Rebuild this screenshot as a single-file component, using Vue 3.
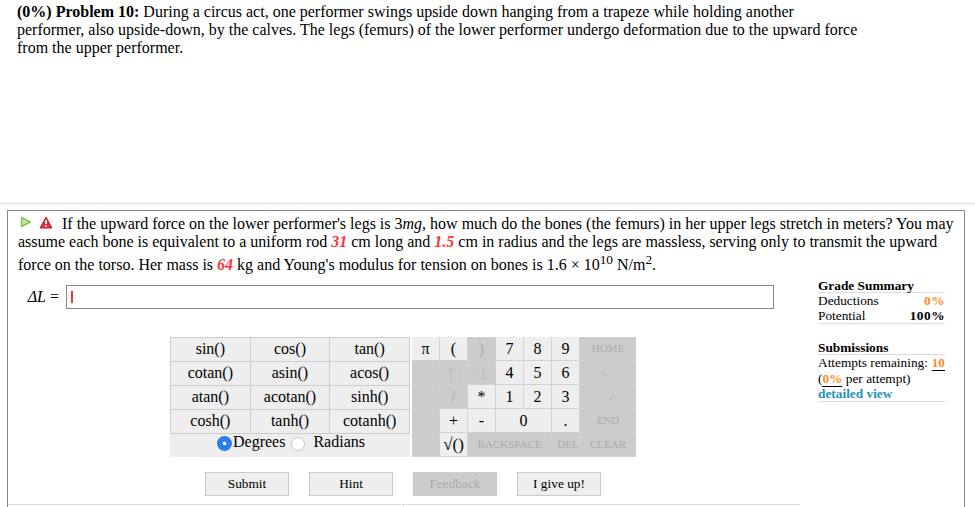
<script setup>
const fns = ['sin()','cos()','tan()','cotan()','asin()','acos()','atan()','acotan()','sinh()','cosh()','tanh()','cotanh()']
const btns = [{t:'Submit'},{t:'Hint'},{t:'Feedback',off:1},{t:'I give up!'}]
</script>

<template>
  <div class="page">
    <header class="problem">
      <p><b>(0%) Problem 10:</b> During a circus act, one performer swings upside down hanging from a trapeze while holding another<br>performer, also upside-down, by the calves. The legs (femurs) of the lower performer undergo deformation due to the upward force<br>from the upper performer.</p>
    </header>
    <section class="box">
      <p class="question">
        <span class="icons">
          <svg width="12" height="12" viewBox="0 0 12 12"><path d="M1.5 1.5 L10.5 6 L1.5 10.5 Z" fill="#c4e59a" stroke="#8fbf5e" stroke-width="1.4" stroke-linejoin="round"/></svg>
          <svg width="14" height="13" viewBox="0 0 14 13"><path d="M7 1 L13 12 H1 Z" fill="#d8303f" stroke="#c02535" stroke-width="1" stroke-linejoin="round"/><path d="M7 4 V8 M7 9.2 V10.8" stroke="#fff" stroke-width="1.7"/></svg>
        </span>If the upward force on the lower performer's legs is 3<i>mg</i>, how much do the bones (the femurs) in her upper legs stretch in meters? You may<br>assume each bone is equivalent to a uniform rod <b class="var">31</b> cm long and <b class="var">1.5</b> cm in radius and the legs are massless, serving only to transmit the upward<br>force on the torso. Her mass is <b class="var">64</b> kg and Young's modulus for tension on bones is 1.6 × 10<sup>10</sup> N/m<sup>2</sup>.
      </p>
      <div class="work">
        <div class="main">
          <div class="answer">
            <label><i>ΔL</i> =</label>
            <div class="input"><span class="caret"></span></div>
          </div>
          <div class="calc">
            <div class="fn-panel">
              <div class="fns">
                <div v-for="f in fns" :key="f" class="fn">{{ f }}</div>
              </div>
              <div class="modes">
                <span class="radio on"></span><span>Degrees</span>
                <span class="radio"></span><span class="rad">Radians</span>
              </div>
            </div>
            <div class="keys">
              <div class="k">π</div><div class="k">(</div><div class="k off">)</div><div class="k">7</div><div class="k">8</div><div class="k">9</div><div class="k off sm">HOME</div>
              <div class="k off"></div><div class="k off arrow">↑<small>/</small></div><div class="k off arrow"><small>^</small>↓</div><div class="k">4</div><div class="k">5</div><div class="k">6</div><div class="k off sm wide">←</div>
              <div class="k off"></div><div class="k off">/</div><div class="k">*</div><div class="k">1</div><div class="k">2</div><div class="k">3</div><div class="k off sm wide">→</div>
              <div class="k off"></div><div class="k">+</div><div class="k">-</div><div class="k two">0</div><div class="k">.</div><div class="k off sm">END</div>
              <div class="k off"></div><div class="k sq">√()</div><div class="k off sm three">BACKSPACE</div><div class="k off sm del">DEL</div><div class="k off sm">CLEAR</div>
            </div>
          </div>
          <div class="actions">
            <button v-for="b in btns" :key="b.t" :class="{ off: b.off }">{{ b.t }}</button>
          </div>
        </div>
        <aside class="side">
          <h4>Grade Summary</h4>
          <div class="row"><span>Deductions</span><b class="or pct">0%</b></div>
          <div class="row last"><span>Potential</span><b class="pct">100%</b></div>
          <h4 class="sub">Submissions</h4>
          <div class="row"><span>Attempts remaining:</span><b class="or ul">10</b></div>
          <div class="plain">(<b class="or ul">0%</b> per attempt)</div>
          <div class="detail">detailed view</div>
        </aside>
      </div>
      <div class="foot"><div></div><div></div></div>
    </section>
  </div>
</template>

<style>
html, body { margin: 0; background: #fff; overflow: hidden; }
</style>

<style scoped>
.page { width: 975px; height: 507px; overflow: hidden; font-family: "Liberation Serif", serif; font-size: 16px; color: #000; position: relative; }
p { margin: 0; }
.problem { height: 200px; padding: 3px 17px 0; border-bottom: 1px solid #ddd; line-height: 18px; }
.box { margin: 6px 10px 0 7px; border: 1px solid #888; border-bottom: 0; padding: 4px 10px 0; height: 300px; box-sizing: border-box; }
.question { line-height: 18px; }
.question sup { font-size: 13.33px; }
.icons { display: inline-flex; gap: 7px; width: 44px; vertical-align: 1px; padding-left: 2px; box-sizing: border-box; align-items: flex-start; }
.var { color: #f33; font-style: italic; }
.work { display: flex; margin-top: 11px; position: relative; }
.main { width: 790px; }
.answer { display: flex; align-items: center; }
.answer label { width: 41px; text-align: right; white-space: nowrap; }
.input { width: 702px; height: 22px; margin-left: 7px; border: 1px solid #888; background: #fff; display: flex; align-items: center; padding-left: 4px; }
.caret { flex: none; width: 2px; height: 12px; background: #ff3030; }
.calc { display: flex; gap: 2px; margin: 28px 0 0 152px; }
.fn-panel { width: 240px; background: #eee; }
.fns { display: grid; grid-template-columns: repeat(3, 1fr); gap: 1px; background: #ccc; border: 1px solid #ccc; border-bottom: 0; box-sizing: border-box; }
.fn { background: #eee; height: 23px; line-height: 22px; text-align: center; }
.modes { height: 24px; border-top: 1px solid #ccc; display: flex; align-items: flex-start; justify-content: center; line-height: 16px; box-sizing: border-box; padding-left: 2px; }
.radio { width: 14px; height: 14px; border-radius: 50%; background: #fff; border: 1px solid #c4c4c4; box-sizing: border-box; margin: 3px 2px 0 0; }
.radio.on { background: radial-gradient(circle, #fff 0 1.5px, #2b7fe8 2.2px); border: 0; width: 15px; height: 15px; margin: 2px 1px 0 0; }
.rad { margin-left: 6px; }
.modes span:nth-child(3) { margin-left: 6px; }
.keys { width: 224px; height: 120px; display: grid; grid-template-columns: repeat(6, 27px) 56px; grid-auto-rows: 23px; gap: 1px; background: #d2d2d2; }
.k { background: #eee; text-align: center; line-height: 23px; font-size: 16px; overflow: hidden; white-space: nowrap; }
.k.off { background: #ccc; color: #aaa; }
.sm { font-size: 11px; }
.wide { font-size: 14px; color: #bbb !important; }
.arrow { font-size: 22px; color: #bbb !important; letter-spacing: 2px; }
.arrow small { font-size: 12px; letter-spacing: 0; }
.two { grid-column: span 2; }
.three { grid-column: span 3; }
.del { padding-left: 5px; }
.sq { font-size: 17px; }
.actions { display: flex; gap: 20px; margin: 15px 0 0 187px; }
button { width: 84px; height: 24px; border: 1px solid #ccc; background: #eee; font: 13.33px "Liberation Serif", serif; color: #000; padding: 0; }
button.off { background: #ccc; color: #aaa; }
.side { position: absolute; left: 800px; top: -6px; width: 127px; font-size: 13.33px; line-height: 15px; white-space: nowrap; }
h4 { margin: 0; font-size: 13.33px; line-height: 13px; border-bottom: 1px solid #ddd; }
.row { display: flex; justify-content: space-between; }
.row.last { border-bottom: 1px solid #ddd; }
.sub { margin-top: 17px; }
.or { color: #ff8a2b; }
.pct { letter-spacing: 0.5px; }
.ul { border-bottom: 1px solid #000; }
.detail { color: #1d92b8; font-weight: bold; border-bottom: 1px solid #ddd; }
.foot { display: flex; position: absolute; left: 8px; top: 504px; width: 792px; height: 3px; border-top: 1px solid #ddd; box-sizing: border-box; }
.foot div:first-child { width: 395px; border-right: 1px solid #ddd; height: 3px; }
</style>
